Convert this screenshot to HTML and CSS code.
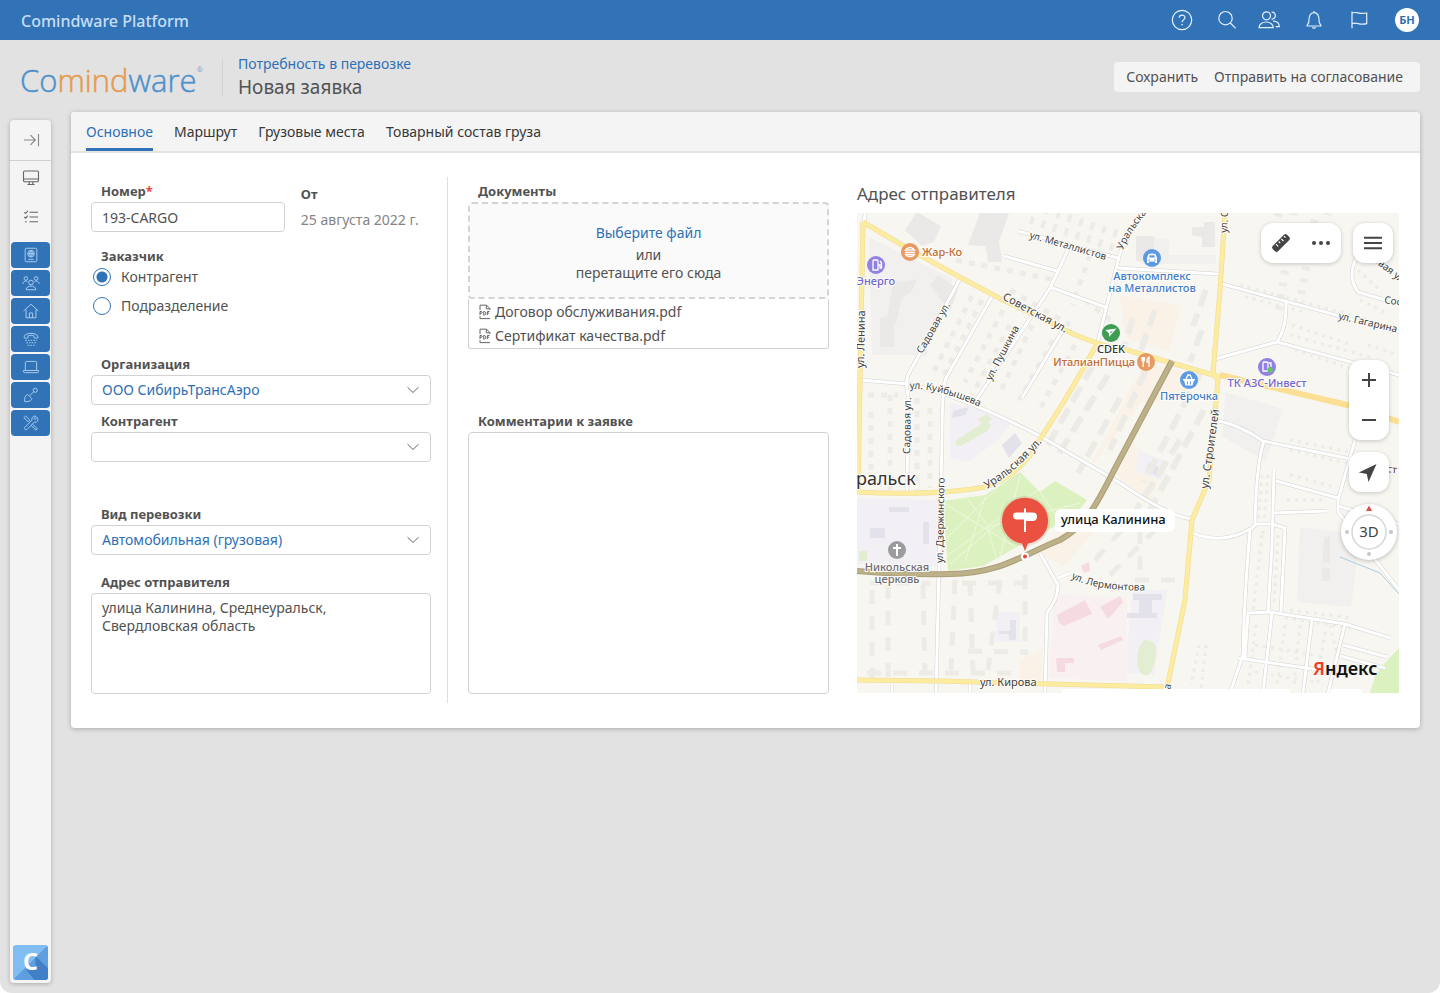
FILE: index.html
```html
<!DOCTYPE html>
<html lang="ru">
<head>
<meta charset="utf-8">
<meta name="viewport" content="width=device-width, initial-scale=1">
<title>Новая заявка — Comindware Platform</title>
<link rel="stylesheet" href="styles.css">
</head>
<body>
<div class="app">
  <header class="topbar">
    <span class="topbar-title">Comindware Platform</span>
    <nav class="topbar-nav" aria-label="Сервисы">
      <div class="topbar-group">
        <button class="icon-btn" type="button" aria-label="Справка"><svg viewBox="0 0 24 24"><circle cx="12" cy="12" r="9.7"/><path d="M9.2 9.8c0-3.6 5.8-3.5 5.8-.2 0 2.2-2.9 2-2.9 4.6"/><path d="M12.1 16v1.3" stroke-width="1.5"/></svg></button>
        <button class="icon-btn" type="button" aria-label="Поиск"><svg viewBox="0 0 24 24"><circle cx="10.5" cy="10.2" r="6.7"/><path d="M15.3 15l5.4 5.4"/></svg></button>
      </div>
      <div class="topbar-group">
        <button class="icon-btn" type="button" aria-label="Пользователи"><svg viewBox="0 0 24 24"><circle cx="9.5" cy="7.8" r="4"/><path d="M2 19.7c0-7.6 14.3-7.6 14.3 0zM14.6 4.2c5-.8 5 7.600 0 6.900M16 13.100c4-.2 6.300 2 6.300 5.500h-3.600"/></svg></button>
        <button class="icon-btn" type="button" aria-label="Уведомления"><svg viewBox="0 0 24 24"><path d="M12 3v1.400M5 18c0-1.500 1.900-2 1.900-5 0-5 1.300-8.300 5.100-8.300s5.100 3.300 5.100 8.300c0 3 1.900 3.500 1.900 5zM10.400 19.300c.5 1.200 2.700 1.200 3.200 0"/></svg></button>
        <button class="icon-btn" type="button" aria-label="Отметки"><svg viewBox="0 0 24 24"><path d="M5 3.500v16.800M5 5c5-2 7 1.800 14.700 0v10.600c-7.700 2-9.700-2-14.700.2"/></svg></button>
      </div>
      <button class="avatar" type="button">БН</button>
    </nav>
  </header>

  <div class="page-head">
    <div class="brand"><div class="brand-name">Co<span class="brand-orange">mind</span>ware</div><span class="brand-mark">®</span></div>
    <div class="titles">
      <a class="crumb" href="#">Потребность в перевозке</a>
      <h1 class="page-title">Новая заявка</h1>
    </div>
    <div class="actions">
      <button class="action" type="button">Сохранить</button>
      <button class="action" type="button">Отправить на согласование</button>
    </div>
  </div>

  <div class="workspace">
    <nav class="sidebar" aria-label="Разделы">
      <button class="side-toggle" type="button" aria-label="Развернуть"><svg viewBox="0 0 20 20"><path d="M3 10h11M9.500 5.200l4.800 4.800-4.800 4.800M17.500 4v12.300"/></svg></button>
      <button class="side-plain side-desk" type="button" aria-label="Рабочий стол"><svg viewBox="0 0 20 20"><rect x="2.500" y="3" width="15" height="10.700" rx="1.200"/><path d="M2.500 11h15M8.200 13.700v2.500M11.800 13.700v2.500M6.500 16.500h7"/></svg></button>
      <button class="side-plain side-tasks" type="button" aria-label="Задачи"><svg viewBox="0 0 20 20"><path d="M8.500 5.300h8.500M8.500 10h8.500M8.500 14.700h8.500M3.300 5.300l1.300 1.200 2.200-2.600M3.300 10l1.300 1.200 2.200-2.600M4 14.700h1.700"/></svg></button>
      <div class="side-apps">
        <button class="side-app" type="button" aria-label="Паспорт"><svg viewBox="0 0 20 20"><rect x="3.500" y="2.500" width="13" height="15" rx="1.500"/><circle cx="10" cy="8.500" r="3.700"/><path d="M6.300 8.500h7.400M10 4.800v7.400M10 4.800c-2.200 2-2.200 5.400 0 7.400M10 4.800c2.200 2 2.200 5.400 0 7.400M7 14.800h6"/></svg></button>
        <button class="side-app" type="button" aria-label="Контрагенты"><svg viewBox="0 0 20 20"><circle cx="10" cy="9.500" r="2.600"/><circle cx="4.300" cy="5" r="2"/><circle cx="15.700" cy="5" r="2"/><path d="M4.700 17.500c0-5.500 10.600-5.500 10.600 0zM1 11c0-3.200 3.300-3.700 5-2.400M19 11c0-3.200-3.300-3.700-5-2.400"/></svg></button>
        <button class="side-app" type="button" aria-label="Главная"><svg viewBox="0 0 20 20"><path d="M1.800 10L10 2.500l8.200 7.500M4.500 8.500v9h11v-9M8.200 17.500v-5.300h3.600v5.300"/></svg></button>
        <button class="side-app" type="button" aria-label="Телефон"><svg viewBox="0 0 20 20"><path d="M2.500 8.800c-1.500-6.800 16.500-6.800 15 0-1.500.6-3 .4-4.200-.2V6.500c-2.200-.9-4.400-.9-6.600 0v2.100c-1.200.6-2.700.8-4.200.2z"/><path d="M3.500 11.500h13M4.800 14.200h11M6.200 17h8" stroke-dasharray="1.800 1.200"/></svg></button>
        <button class="side-app" type="button" aria-label="Оборудование"><svg viewBox="0 0 20 20"><path d="M3.700 13.700V5q0-1.200 1.200-1.200h10.200q1.200 0 1.200 1.200v8.700M1.500 13.900h17v.8q0 1.600-1.600 1.600H3.100q-1.600 0-1.600-1.600z"/></svg></button>
        <button class="side-app" type="button" aria-label="Инструмент"><svg viewBox="0 0 20 20"><circle cx="14.700" cy="4.700" r="2.300"/><path d="M13 6.400l-4.500 4.500M6.300 9.300l4.600 4.600c-.8 3.400-4.600 3.700-7.900 3.500-.2-3.300 0-7.100 3.300-8.100z"/></svg></button>
        <button class="side-app" type="button" aria-label="Настройки"><svg viewBox="0 0 20 20"><path d="M2.500 3.500l1.700-1.200 4.500 4.500-1.900 1.900-4.500-4.500zM11.600 11.200l5.400 5.200-1.500 1.500-5.400-5.200M16.800 3.700l-2.300 2.400-1.200-1.200 2.200-2.300c-3-.9-5.100 1.500-4.300 4.100l-8.200 8.200c-1 1.500 1 3.500 2.500 2.300l8.100-8.200c2.700.9 5.400-1.500 3.200-5.300z"/></svg></button>
      </div>
      <a class="side-logo" href="#" aria-label="Comindware"><svg viewBox="0 0 36 36"><rect width="36" height="36" rx="3" fill="#82bdf2"/><path d="M1 35L35 1q1 1 1 2v30q0 3-3 3H3q-1 0-2-1z" fill="#5f9fe0"/><path d="M23 11l13 13v9q0 3-3 3H22l-9-11 10-3z" fill="#4080c6"/><text x="18" y="26" text-anchor="middle">C</text></svg></a>
    </nav>

    <main class="card">
      <nav class="tabs" aria-label="Вкладки">
        <a class="tab tab-active" href="#">Основное</a>
        <a class="tab" href="#">Маршрут</a>
        <a class="tab" href="#">Грузовые места</a>
        <a class="tab" href="#">Товарный состав груза</a>
      </nav>

      <form class="form">
        <section class="col col-main">
          <div class="row">
            <div class="field field-number">
              <label class="label" for="number">Номер<span class="required">*</span></label>
              <input class="control" id="number" type="text" value="193-CARGO">
            </div>
            <div class="field field-date">
              <span class="label">От</span>
              <span class="date">25 августа 2022 г.</span>
            </div>
          </div>
          <fieldset class="customer">
            <legend class="label">Заказчик</legend>
            <label class="radio"><input type="radio" name="customer" checked>Контрагент</label>
            <label class="radio"><input type="radio" name="customer">Подразделение</label>
          </fieldset>
          <div class="field field-org">
            <label class="label" for="org">Организация</label>
            <div class="select"><select class="control" id="org"><option>ООО СибирьТрансАэро</option></select><svg viewBox="0 0 14 8"><path d="M1.500 1.200L7 6.500l5.500-5.300"/></svg></div>
          </div>
          <div class="field field-party">
            <label class="label" for="party">Контрагент</label>
            <div class="select"><select class="control" id="party"><option></option></select><svg viewBox="0 0 14 8"><path d="M1.500 1.200L7 6.500l5.500-5.300"/></svg></div>
          </div>
          <div class="field field-kind">
            <label class="label" for="kind">Вид перевозки</label>
            <div class="select"><select class="control" id="kind"><option>Автомобильная (грузовая)</option></select><svg viewBox="0 0 14 8"><path d="M1.500 1.200L7 6.500l5.500-5.300"/></svg></div>
          </div>
          <div class="field">
            <label class="label" for="address">Адрес отправителя</label>
            <textarea class="control area" id="address">улица Калинина, Среднеуральск,
Свердловская область</textarea>
          </div>
        </section>

        <section class="col col-docs">
          <div class="docs">
            <span class="label">Документы</span>
            <div class="dropzone">
              <button class="pick" type="button">Выберите файл</button>
              <span>или</span>
              <span>перетащите его сюда</span>
            </div>
            <ul class="files">
              <li class="file"><svg viewBox="0 0 14 16"><path d="M2 6V1.200h6.500L12 4.700V6M8.300 1.400v3.500H12M2 12v2.600h10"/><path class="pdf-mark" d="M2 11V7.500h1.200q1 0 1 .9t-1 .9H2M5.700 7.500V11h.8q1.300-.2 1.300-1.700t-1.300-1.800zM9.400 11V7.500h2.100M9.400 9.200h1.700"/></svg>Договор обслуживания.pdf</li>
              <li class="file"><svg viewBox="0 0 14 16"><path d="M2 6V1.200h6.500L12 4.700V6M8.300 1.400v3.500H12M2 12v2.600h10"/><path class="pdf-mark" d="M2 11V7.500h1.200q1 0 1 .9t-1 .9H2M5.700 7.500V11h.8q1.300-.2 1.300-1.700t-1.300-1.800zM9.400 11V7.500h2.100M9.400 9.200h1.700"/></svg>Сертификат качества.pdf</li>
            </ul>
          </div>
          <div class="comments">
            <label class="label" for="comments">Комментарии к заявке</label>
            <textarea class="control comments-area" id="comments"></textarea>
          </div>
        </section>

        <section class="col col-map">
          <h2 class="map-title">Адрес отправителя</h2>
          <div class="map">
            <svg class="map-canvas" viewBox="857 213 542 480" role="img" aria-label="Карта: улица Калинина">
              <defs>
                <path id="t-metal" d="M1029 238Q1065 248 1112 262"/>
                <path id="t-sov" d="M1002 299L1080 341"/>
                <path id="t-kuib" d="M910 389Q935 387 985 409"/>
                <path id="t-ural" d="M987 489Q1018 472 1054 428"/>
                <path id="t-lerm" d="M1071 578Q1098 593 1160 590"/>
                <path id="t-ural-top" d="M1123 250Q1130 230 1160 198"/>
              </defs>
              <rect x="857" y="213" width="542" height="480" fill="#f8f6f1"/>
              <g class="zones">
                <path fill="#f1f0ef" d="M869 237l84 42-32 76h-49zM1225 392l58 17-17 52-43-24zM1300 527l60 8-9 72-54-5zM1139 235l30 5v15h47v9h-76z"/>
                <path fill="#fbf1e7" d="M1120 295l61 11-12 45-43-13zM1088 470l57-108 45 12-4 25-46 5zM1035 550l50-38 13 16-35 38zM1130 440l32 28-12 34-34-28zM1020 660l22-10v30h-22z"/>
                <path fill="#f2f0f5" d="M857 498l82 2-3 66-79-2zM950 402l40 10 20 12-12 16-30 22-18-4zM996 612h24v30h-24zM1133 590h34l-13 85-30-2zM1138 450l30 12-6 18-26-8z"/>
                <path fill="#faf0f2" d="M1055 594l72 4v83l-78-3z"/>
                <path fill="#d8f1bb" d="M943 501l42-6 35-23 20 20 15-11 32 19-12 15-44 24-48 27-35 5zM1399 648q-15 15-24 28l-5 17h29z"/>
                <path fill="#e0edcf" d="M957 440l27-18q12 0 2 10l-25 14q-9 0-4-6zM1145 640q12-1 11 12-3 26-12 23-9-4-6-22 1-10 7-13zM978 419l9-5 5 5-9 6zM859 551h8v10h-8z"/>
                <path fill="#e1e0ea" d="M889 507h20v5h-20zM870 528h15v10h-15zM923 522h6v22h-6zM953 411l16-4-4 8-13 3zM1002 445l13-12 7 10-13 15zM1149 463l13 6-3 8-13-7zM1010 620h6v20h-7v-6h-10v-3h11zM1133 594h29v6h-10v13h5v5h-30v-5h12v-13h-6z"/>
                <path fill="#f5d9e0" d="M1057 615l28-15 7 14-28 12-5-3zM1100 607l20-11 3 6-15 17zM1098 645l23-9 2 4-22 10zM1056 658h18v5h-9v9h-8zM1081 566l8-4 1 9-6 2z"/>
                <path fill="#e9e8e7" d="M968 245l12-32 29 0-12 34zM905 230l12-18 24 14-7 16-12 4zM930 285l8-10 20 14-8 23zM880 318l14-4v33h-14zM985 243l13-8 4 27h-14zM1136 236h18v25h-18zM1204 222h11v25h-13v-10l-10-2v-8h12zM893 283l24-4-5 12-10 7-6 25h-10zM1325 537h5v26h-7v-15zM1322 568h8v13h-8z"/>
              </g>
              <g class="houses">
                <path stroke-width="8" stroke-dasharray="4 8" d="M1030 220l85 28M1045 210l84 28M1265 250l14-37M1279 310l15-97M1299 306l17-93M1318 250l10-37"/>
                <path stroke-width="5" stroke-dasharray="6 7" d="M952 290l-31 70M972 296l-39 77M982 300l-38 75M1003 310l-38 72M1010 325l-38 70M1032 325l-32 68M1053 340l-34 60M1075 345l-34 62M868 395h30M871 412v80M890 395v95M917 398v92M930 408v80M956 260l100 20M1010 290l60 35M1085 300l25 20M1090 255l-18 50"/>
                <path stroke-width="6" stroke-dasharray="17 8" d="M1093 365l-45 80M1108 375l-50 80M1120 398l-42 75M1146 370l-36 80M1202 370l-58 112M1204 410l-54 100M1180 440l-50 80M1133 318l-9 30M1155 310l-14 40M1206 290l-13 36M1202 330l-12 32"/>
                <path stroke-width="5" stroke-dasharray="14 12" d="M872 590v90M888 585v95M923 585l2 90M955 580l-4 90M970 582l3 90M1000 580l-12 90M1025 575v80M867 673h150M870 583h60M962 583h75M968 651l60 1M1095 560l40-45M1110 575l50-50M1140 570v-40M1135 580h40"/>
                <path stroke-width="3" stroke-dasharray="3 5" d="M1240 285l130 35M1245 297l60 15M1292 325l60 20M1290 335l80 22M1295 350l60 20M1290 450l60 14M1290 440l60 12M1262 475l-4 50M1268 475l-5 60M1262 535l-9 75M1278 535l-4 70M1290 475l45 12M1287 500l40 0M1256 625l-8 60M1285 625l-8 60M1300 625l-6 60M1325 632l-8 55M1285 618l90 14M1368 345l28 9M1360 300l28 14M1358 270l24 22M1255 645l70 12M1255 672l60 10M1290 610l60 8M1330 625l12 50M1199 645l-8 40M1206 645l-5 45"/>
              </g>
              <g class="road-case">
                <path d="M865 213l-1 10M961 277l-31 58-22 40q-3 8 0 20l-1 98M994 293l-48 85q-4 8-4 62l-6 253M1068 250l-18 38-75 114M1018 231l100 27M1004 256l53 15M1050 287l55 20M1063 330l-41 68M1141 213l-21 40-22 88M860 380l48 4q50 10 134 53l78 46q50 34 72 36M1118 268l100 6M1222 284l177 48M1286 302q1 25-9 40l-62 17M1277 342l122 33M1358 255q-12 20 0 37l27 8M1215 420q25 5 48 21l88 18M1264 441q-8 24-9 84l-5 5q-6 70-7 125l-13 38M1274 470l-2 75-4 68M1276 481l62 17M1273 513l54-2M1355 440l-17 60v12l61 78M1338 506l61 18M1255 524h17l13 4-4 84M1192 533q32 12 58-4M1248 613l22-1 75 12 45 14M1248 613l-3 45M1272 613l-9 80M1312 620l-9 73M1345 624l-17 69M1238 658l82 12M1343 645l44 12M1340 656l45 12M1040 553l18 32q0 14-11 28l-2 80M1058 578l12-5M892 681v12M970 681v12"/>
              </g>
              <g class="road-fill">
                <path d="M865 213l-1 10M961 277l-31 58-22 40q-3 8 0 20l-1 98M994 293l-48 85q-4 8-4 62l-6 253M1068 250l-18 38-75 114M1018 231l100 27M1004 256l53 15M1050 287l55 20M1063 330l-41 68M1141 213l-21 40-22 88M860 380l48 4q50 10 134 53l78 46q50 34 72 36M1118 268l100 6M1222 284l177 48M1286 302q1 25-9 40l-62 17M1277 342l122 33M1358 255q-12 20 0 37l27 8M1215 420q25 5 48 21l88 18M1264 441q-8 24-9 84l-5 5q-6 70-7 125l-13 38M1274 470l-2 75-4 68M1276 481l62 17M1273 513l54-2M1355 440l-17 60v12l61 78M1338 506l61 18M1255 524h17l13 4-4 84M1192 533q32 12 58-4M1248 613l22-1 75 12 45 14M1248 613l-3 45M1272 613l-9 80M1312 620l-9 73M1345 624l-17 69M1238 658l82 12M1343 645l44 12M1340 656l45 12M1040 553l18 32q0 14-11 28l-2 80M1058 578l12-5M892 681v12M970 681v12"/>
              </g>
              <path d="M1340 557l40 16 19 21" fill="none" stroke="#a9cde3"/>
              <path class="paths" d="M944 503l76 47M985 497l-20 65M1020 475l-20 83M948 555l90-65M945 540l60-60M1040 492l20 30M985 528l95-25M1025 500l-75 64M965 495l22 30 10 35"/>
              <g class="main-case"><path d="M863 222l-3 158-2 112M863 222q70 42 140 78l70 34q40 16 54 16l93 27M1098 342q-30 55-56 94-20 40-57 51-50 9-128 5M1225 213l-5 77-7 83 5 7-9 100-17 40-7 80-19 93M857 680l83 1 110 3 116 3"/></g>
              <g class="main-fill"><path d="M863 222l-3 158-2 112M863 222q70 42 140 78l70 34q40 16 54 16l93 27M1098 342q-30 55-56 94-20 40-57 51-50 9-128 5M1225 213l-5 77-7 83 5 7-9 100-17 40-7 80-19 93M857 680l83 1 110 3 116 3"/></g>
              <path d="M1220 375l140 33 39 14" fill="none" stroke="#fadf94" stroke-width="6"/>
              <path d="M857 571q50 4 93 3c50 0 74-20 110-34 30-16 40-44 60-81l52-98" fill="none" stroke="#aa9e76" stroke-width="6"/>
              <path d="M857 571q50 4 93 3c50 0 74-20 110-34 30-16 40-44 60-81l52-98" fill="none" stroke="#bdb18a" stroke-width="4"/>

              <g class="street">
                <text><textPath href="#t-metal">ул. Металлистов</textPath></text>
                <text class="street-big"><textPath href="#t-sov">Советская ул.</textPath></text>
                <text><textPath href="#t-kuib">ул. Куйбышева</textPath></text>
                <text class="street-big"><textPath href="#t-ural">Уральская ул.</textPath></text>
                <text><textPath href="#t-lerm">ул. Лермонтова</textPath></text>
                <text><textPath href="#t-ural-top">Уральская ул.</textPath></text>
                <text transform="translate(922 354) rotate(-60)">Садовая ул.</text>
                <text transform="translate(991 381) rotate(-62)">ул. Пушкина</text>
                <text class="street-big" transform="translate(864 368) rotate(-89)">ул. Ленина</text>
                <text transform="translate(910 454) rotate(-89)">Садовая ул.</text>
                <text transform="translate(943 563) rotate(-89)">ул. Дзержинского</text>
                <text class="street-big" transform="translate(1208 489) rotate(-82)">ул. Строителей</text>
                <text transform="translate(1227 233) rotate(-87)">ул. Строителей</text>
                <text transform="translate(1338 319) rotate(13)">ул. Гагарина</text>
                <text transform="translate(1384 303) rotate(8)">Сосновая</text>
                <text transform="translate(1368 257) rotate(38)">новая ул.</text>
                <text transform="translate(1372 470) rotate(8)">Мост</text>
                <text transform="translate(1170 690) rotate(-75)">а</text>
                <text class="street-big" x="980" y="686">ул. Кирова</text>
              </g>
              <text class="city" x="856" y="485">ральск</text>

              <g class="poi" text-anchor="middle">
                <circle cx="910" cy="252" r="9" fill="#e99a63"/><path class="glyph" d="M905.500 250q4.500-5 9 0zM905 252.300h10M905.500 254.500h9q-1 2-3 2h-3q-2 0-3-2z"/>
                <text class="food" text-anchor="start" x="922" y="256">Жар-Ко</text>
                <circle cx="876" cy="265" r="9" fill="#9181e2"/><path class="glyph" d="M873 270v-9q0-1 1-1h3q1 0 1 1v9zM878 265h2v3h1.500v-5l-1.500-2"/>
                <text class="service" x="876" y="285">Энерго</text>
                <circle cx="1152" cy="258" r="9" fill="#5d9ae4"/><path fill="#fff" d="M1147 263v-5l1.500-4q3.500-1 7 0l1.500 4v5h-2v-1.500h-6v1.500z"/><path d="M1149 257.500h6l-.8-2.200h-4.400z" fill="#5d9ae4"/><circle cx="1149" cy="260" r=".8" fill="#5d9ae4"/><circle cx="1155" cy="260" r=".8" fill="#5d9ae4"/>
                <text class="shop" x="1152" y="280">Автокомплекс</text><text class="shop" x="1152" y="292">на Металлистов</text>
                <circle cx="1111" cy="333" r="9" fill="#3f9c53"/><path d="M1105.500 330l11-1.500-7.500 8.500v-3.500z" fill="#fff"/><path d="M1110 332l3-1.200-2 2.500z" fill="#3f9c53"/>
                <text class="dark" x="1111" y="353">CDEK</text>
                <circle cx="1146" cy="362" r="9" fill="#e99a63"/><path class="glyph" d="M1142 357v3q0 1.500 1.200 1.500t1.300-1.500v-3M1143.200 357v10M1149 367v-10q-2 1-2 5h2"/>
                <text class="food" text-anchor="end" x="1135" y="366">ИталианПицца</text>
                <circle cx="1189" cy="380" r="9" fill="#5d9ae4"/><path fill="#fff" d="M1183 379h12v1.500h-1l-1.500 5h-7l-1.500-5h-1z"/><path class="glyph" d="M1186 379l2-4h2l2 4"/><path d="M1187.500 381.500v3M1190.500 381.500v3" stroke="#5d9ae4"/>
                <text class="shop" x="1189" y="400">Пятёрочка</text>
                <circle cx="1267" cy="367" r="9" fill="#9181e2"/><path class="glyph" d="M1263 371v-8q0-1 1-1h3q1 0 1 1v8zM1269 363h2v4"/><circle cx="1270" cy="370" r="2.700" fill="#63c763"/>
                <text class="service" x="1267" y="387">ТК АЗС-Инвест</text>
                <circle cx="897" cy="550" r="9" fill="#9c9c9f"/><path d="M897 544v12M893 548h8" stroke="#fff" stroke-width="2"/>
                <text class="church" x="897" y="571">Никольская</text><text class="church" x="897" y="583">церковь</text>
              </g>

              <rect x="1055" y="509" width="120" height="23" rx="6" fill="#fff"/>
              <text class="pin-label" x="1061" y="524">улица Калинина</text>
              <circle cx="1025" cy="521" r="25" fill="#bd4a3a" opacity=".15"/>
              <path fill="#ea5140" d="M1025 551l-3-7.500a23 23 0 1 1 6 0z"/>
              <path fill="#fff" d="M1024 508.500h2v4h6.500q4.500 0 4.500 4.200t-4.500 4.300H1026v11h-2v-12.500h-7q-4-.2-4-3.700t4-3.300h7z"/>
              <circle cx="1025" cy="556.500" r="4" fill="#fff"/><circle cx="1025" cy="556.500" r="2" fill="#e24b3c"/>
              <rect x="1062" y="689" width="228" height="8" rx="3" fill="#fff"/><rect x="1330" y="689" width="32" height="8" rx="3" fill="#fff"/>
              <text class="yandex" x="1313" y="675"><tspan fill="#ef3b2b">Я</tspan>ндекс</text>
            </svg>
            <div class="map-tools map-tools-row">
              <div class="map-box">
                <button class="map-btn" type="button" aria-label="Линейка"><svg viewBox="0 0 40 40"><path fill="#444" d="M11.700 23L23 11.700q1.500-1.300 3 0l2.300 2.300q1.500 1.500 0 3L17 28.300q-1.500 1.300-3 0L11.700 26q-1.500-1.500 0-3z"/><path d="M15 21.200l2.200 2.200M17.700 18.500l1.500 1.500M20.300 15.900l2.200 2.200M23 13.200l1.500 1.500" stroke="#fff" stroke-width="1.200"/></svg></button>
                <button class="map-btn" type="button" aria-label="Ещё"><svg viewBox="0 0 40 40" fill="#444"><circle cx="13" cy="20" r="2"/><circle cx="20" cy="20" r="2"/><circle cx="27" cy="20" r="2"/></svg></button>
              </div>
              <div class="map-box"><button class="map-btn" type="button" aria-label="Меню"><svg viewBox="0 0 40 40"><path d="M11 14.800h18M11 20h18M11 25.200h18" stroke="#444" stroke-width="2"/></svg></button></div>
            </div>
            <div class="map-tools map-tools-col">
              <div class="map-box map-box-col">
                <button class="map-btn" type="button" aria-label="Приблизить"><svg viewBox="0 0 40 40"><path d="M13 20h14M20 13v14" stroke="#444" stroke-width="2"/></svg></button>
                <button class="map-btn" type="button" aria-label="Отдалить"><svg viewBox="0 0 40 40"><path d="M13 20h14" stroke="#444" stroke-width="2"/></svg></button>
              </div>
              <div class="map-box"><button class="map-btn" type="button" aria-label="Моё местоположение"><svg viewBox="0 0 40 40"><path fill="#444" d="M27.500 12l-8 18-1.700-8-8-1.500z"/></svg></button></div>
            </div>
            <button class="compass" type="button" aria-label="3D"><svg viewBox="0 0 56 56"><circle cx="28" cy="28" r="17" fill="none" stroke="#d8d8d8" stroke-width="1.500"/><path d="M28 1.500l3 5.500h-6z" fill="#df4e43"/><g fill="#c6c6c6"><circle cx="6" cy="28" r="2"/><circle cx="50" cy="28" r="2"/><circle cx="28" cy="50" r="2"/></g><text x="28" y="33" text-anchor="middle">3D</text></svg></button>
          </div>
        </section>
      </form>
    </main>
  </div>
</div>
</body>
</html>
```

FILE: styles.css
```css
* { box-sizing: border-box; }

body {
  margin: 0;
  background: #fff;
  color: #525252;
  font: 14px/18px "Noto Sans", "Open Sans", sans-serif;
}

button, input, select, textarea { font: inherit; color: inherit; }
button { border: 0; padding: 0; background: none; cursor: pointer; }
a { color: #2f70b5; text-decoration: none; }
svg { display: block; }

.app {
  display: flex;
  flex-direction: column;
  min-height: 100vh;
  background: #e2e2e2;
  border-radius: 0 0 12px 12px;
}

/* Top bar */
.topbar {
  display: flex;
  align-items: center;
  justify-content: space-between;
  height: 40px;
  padding: 0 21px;
  background: #3273b8;
}
.topbar-title { padding-top: 1px; color: #c6def5; font-size: 16px; font-weight: 500; line-height: 24px; }
.topbar-nav { display: flex; align-items: center; gap: 18px; }
.topbar-group { display: flex; gap: 21px; }
.topbar-group:nth-child(2) { margin-right: 6px; }
.icon-btn { width: 24px; height: 24px; }
.icon-btn svg { width: 24px; height: 24px; fill: none; stroke: #e5f0fb; stroke-width: 1.2; }
.avatar {
  width: 24px;
  height: 24px;
  border-radius: 50%;
  background: #fff;
  color: #2f70b5;
  font-size: 11px;
  font-weight: 700;
}

/* Page heading */
.page-head { display: flex; align-items: center; height: 72px; padding: 4px 20px 0; }
.brand {
  display: flex;
  width: 203px;
  height: 38px;
  border-right: 1px solid #d2d2d2;
  color: #4f91c9;
  font: 300 31px/42px "Open Sans", "Noto Sans", sans-serif;
}
.brand-name { -webkit-text-stroke: 0.5px currentColor; }
.brand-orange { color: #e79a4d; }
.brand-mark { font-size: 8px; line-height: 20px; }
.titles { display: flex; flex: 1; flex-direction: column; padding-left: 15px; }
.crumb { line-height: 18px; }
.page-title { margin: 0; font-size: 19px; font-weight: 400; line-height: 28px; }
.actions { display: flex; gap: 16px; margin-bottom: 2px; padding: 0 17px 0 12px; border-radius: 4px; background: #f4f4f4; }
.action { height: 30px; }

/* Workspace */
.workspace { display: flex; flex: 1; gap: 20px; padding: 0 20px 10px 10px; }
.sidebar {
  display: flex;
  flex-direction: column;
  width: 41px;
  margin-top: 8px;
  border-radius: 4px;
  background: #f4f4f4;
  box-shadow: 0 1px 4px rgba(0, 0, 0, .25);
}
.sidebar svg { width: 20px; height: 20px; margin: 0 auto; fill: none; stroke: #666; stroke-width: 1.1; }
.side-toggle { height: 41px; border-bottom: 1px solid #cfcfcf; }
.sidebar .side-toggle svg { stroke: #888; }
.side-desk { height: 33px; }
.side-tasks { height: 46px; }
.side-apps { display: flex; flex-direction: column; gap: 2px; padding: 2px 1px; }
.side-app { height: 26px; border-radius: 4px; background: #3273b8; }
.sidebar .side-app svg { width: 18px; height: 18px; stroke: #a6caed; }
.side-logo { margin: auto 3px 3px; }
.sidebar .side-logo svg { width: 35px; height: 35px; stroke: none; }
.side-logo text { fill: #fff; font-size: 24px; font-weight: 700; }

.card {
  flex: 1;
  align-self: flex-start;
  min-width: 0;
  border-radius: 4px;
  background: #fff;
  box-shadow: 0 1px 5px rgba(0, 0, 0, .25);
}
.tabs {
  display: flex;
  gap: 21px;
  height: 41px;
  padding: 0 15px;
  border-bottom: 2px solid #e4e4e4;
  border-radius: 4px 4px 0 0;
  background: #f4f4f4;
}
.tab { height: 39px; color: #383838; line-height: 40px; }
.tab-active { border-bottom: 3px solid #3273b8; color: #2f70b5; }

.form {
  display: grid;
  grid-template-columns: 357fr 369fr 542fr;
  gap: 20px;
  padding: 24px 21px 25px 20px;
}
.col { min-width: 0; padding: 5px 0 9px; }
.label { display: block; padding: 0 10px 2px; font-size: 13px; font-weight: 700; line-height: 18px; }
.required { color: #de4a3c; }
.control {
  display: block;
  width: 100%;
  height: 30px;
  margin: 0;
  padding: 0 10px;
  border: 1px solid #d2d2d2;
  border-radius: 4px;
  background: #fff;
}

.col-main { padding-right: 16px; border-right: 1px solid #dedede; }
.row { display: flex; gap: 16px; }
.field-number { flex: 0 0 57%; }
.field-date { flex: 1; padding-top: 3px; }
.field-date .label { padding: 0 0 2px; }
.date { display: block; margin-top: 6px; color: #858585; white-space: nowrap; }
.customer { margin: 15px 0 39px; padding: 0; border: 0; }
.radio { display: flex; align-items: center; gap: 10px; height: 20px; }
.radio + .radio { margin-top: 9px; }
.radio input {
  appearance: none;
  width: 18px;
  height: 18px;
  margin: 0 0 0 2px;
  border: 1px solid #3273b8;
  border-radius: 50%;
  background: #fff;
}
.radio input:checked { background: radial-gradient(circle, #3273b8 5px, #fff 6px); }
.field-org { margin-bottom: 7px; }
.field-party { margin-bottom: 43px; }
.field-kind { margin-bottom: 18px; }
.select { position: relative; }
.select select { appearance: none; color: #2f70b5; }
.select svg { position: absolute; top: 11px; right: 11px; width: 14px; height: 8px; fill: none; stroke: #666; pointer-events: none; }
.area { height: 101px; padding: 5px 10px; resize: none; }

.col-docs { display: flex; flex-direction: column; padding-right: 8px; }
.docs { min-height: 230px; }
.dropzone {
  display: flex;
  flex-direction: column;
  align-items: center;
  height: 97px;
  padding-top: 20px;
  border: 2px dashed #d4d4d4;
  border-radius: 4px;
  background: #fafafa;
}
.pick { margin-bottom: 4px; color: #2f70b5; }
.files { margin: 0; padding: 1px 9px 0; border: 1px solid #d2d2d2; border-top: 0; border-radius: 0 0 3px 3px; list-style: none; }
.file { display: flex; align-items: center; gap: 3px; height: 24px; }
.file svg { width: 14px; height: 16px; fill: none; stroke: #666; }
.comments { display: flex; flex: 1; flex-direction: column; }
.comments-area { flex: 1; resize: none; }

/* Map */
.map-title { margin: 0 0 7px; font-size: 17px; font-weight: 400; line-height: 24px; }
.map { position: relative; }
.map-canvas { width: 100%; height: auto; }
.zones { opacity: .9; }
.houses { fill: none; stroke: #edebe6; }
.road-case, .road-fill, .main-case, .main-fill { fill: none; stroke-linejoin: round; }
.road-case { stroke: #d2d2d5; stroke-width: 4; }
.road-fill { stroke: #fff; stroke-width: 3; }
.paths { fill: none; stroke: #eef8dd; }
.main-case { stroke: #f1d99a; stroke-width: 5; }
.main-fill { stroke: #fcec9f; stroke-width: 4; }
.street text, .city, .poi text { paint-order: stroke; stroke: #fdfcf9; stroke-width: 2px; }
.street text { fill: #3f3f3f; font-size: 10px; }
.street .street-big { font-size: 11px; }
.city { fill: #333; font-size: 18px; }
.poi text { font-size: 11px; font-weight: 500; }
.glyph { fill: none; stroke: #fff; stroke-width: 1.3; }
.food { fill: #c26c33; }
.service { fill: #7566cc; }
.shop { fill: #437fc9; }
.dark { fill: #333; }
.church { fill: #6f6c76; }
.pin-label { fill: #111; font-size: 13px; font-weight: 500; }
.yandex { fill: #111; font-size: 18px; font-weight: 600; }
.map-tools { position: absolute; display: flex; gap: 12px; }
.map-tools-row { top: 10px; right: 6px; }
.map-tools-col { top: 147px; right: 10px; flex-direction: column; }
.map-box { display: flex; border-radius: 12px; background: #fff; box-shadow: 0 1px 4px rgba(0, 0, 0, .2); }
.map-box-col { flex-direction: column; }
.map-btn { width: 40px; height: 40px; }
.map-btn svg { width: 40px; height: 40px; }
.compass {
  position: absolute;
  top: 291px;
  right: 2px;
  width: 56px;
  height: 56px;
  border-radius: 50%;
  background: #fff;
  box-shadow: 0 1px 4px rgba(0, 0, 0, .25);
}
.compass svg { width: 56px; height: 56px; }
.compass text { fill: #444; font-size: 15px; }
```
